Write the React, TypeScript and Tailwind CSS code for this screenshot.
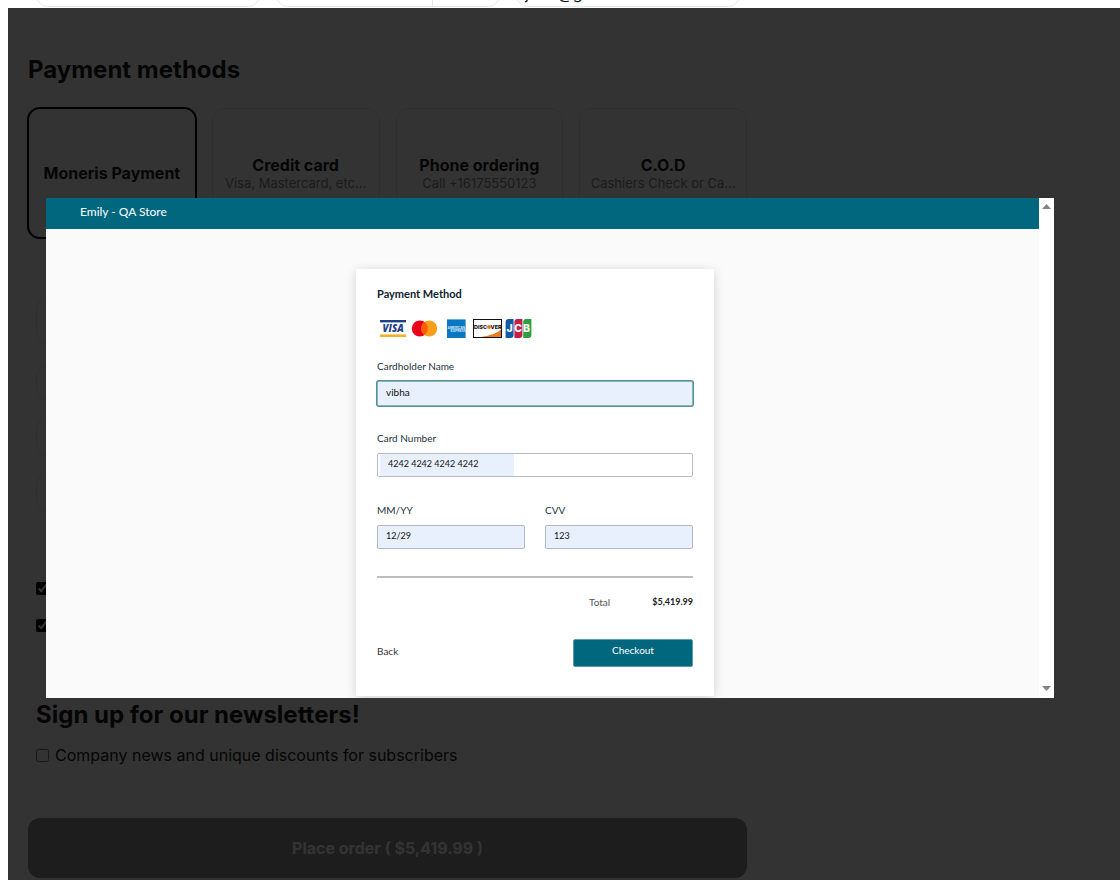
import React from "react";

const methods = [
  { id: "moneris", title: "Moneris Payment", note: "" },
  { id: "credit", title: "Credit card", note: "Visa, Mastercard, etc..." },
  { id: "phone", title: "Phone ordering", note: "Call +16175550123" },
  { id: "cod", title: "C.O.D", note: "Cashiers Check or Ca..." },
];

function ContactStrip() {
  return (
    <div className="flex h-2 items-end gap-4 overflow-hidden bg-white pb-px pl-9">
      <input
        aria-label="Full name"
        className="h-12 w-56 shrink-0 rounded-xl border border-gray-200 px-2"
      />
      <div className="flex h-12 w-56 shrink-0 rounded-xl border border-gray-200">
        <input aria-label="Phone" className="min-w-0 flex-1 px-2" />
        <input
          aria-label="Extension"
          className="w-[67px] border-l border-gray-200 px-2"
        />
      </div>
      <input
        aria-label="Email"
        type="email"
        defaultValue="john@gmail.com"
        className="h-12 w-56 shrink-0 rounded-xl border border-gray-200 px-2 pt-5 text-base text-gray-900"
      />
    </div>
  );
}

function MethodCard({
  title,
  note,
  selected,
}: {
  title: string;
  note: string;
  selected: boolean;
}) {
  return (
    <button
      type="button"
      aria-pressed={selected}
      className={
        selected
          ? "flex h-[130px] min-w-0 flex-col items-center justify-center rounded-xl px-2 outline-2 -outline-offset-1 outline-black"
          : "flex h-[130px] min-w-0 flex-col items-center justify-center rounded-xl border border-gray-200 px-2"
      }
    >
      <span className="text-base leading-5 font-bold whitespace-nowrap">
        {title}
      </span>
      {note && (
        <span className="text-center text-[13px] leading-4 whitespace-nowrap text-[#858585]">
          {note}
        </span>
      )}
    </button>
  );
}

function OrderPage() {
  return (
    <div className="max-w-[739px] pt-[46px] pl-5 text-[#1a1a1a]">
      <h2 className="text-2xl leading-8 font-bold">Payment methods</h2>
      <div className="mt-[22px] grid grid-cols-4 gap-4">
        {methods.map((m, i) => (
          <MethodCard
            key={m.id}
            title={m.title}
            note={m.note}
            selected={i === 0}
          />
        ))}
      </div>
      <div className="mt-[59px] flex flex-col px-2">
        <input
          aria-label="Coupon code"
          className="h-12 rounded-xl border border-gray-200 px-3"
        />
        <input
          aria-label="Purchase order"
          className="mt-5 h-9 rounded-xl border border-gray-200 px-3"
        />
        <input
          aria-label="Reference"
          className="mt-4 h-10 rounded-xl border border-gray-200 px-3"
        />
        <input
          aria-label="Comments"
          className="mt-4 h-10 rounded-xl border border-gray-200 px-3"
        />
        <div className="mt-[69px] flex flex-col gap-6">
          <input
            type="checkbox"
            aria-label="Same billing address"
            defaultChecked
            className="size-[13px] accent-black"
          />
          <input
            type="checkbox"
            aria-label="Accept terms"
            defaultChecked
            className="size-[13px] accent-black"
          />
        </div>
        <h2 className="mt-[67px] text-2xl leading-8 font-bold">
          Sign up for our newsletters!
        </h2>
        <label className="mt-3 flex items-center gap-1.5 text-base leading-6">
          <input type="checkbox" className="size-[13px]" />
          Company news and unique discounts for subscribers
        </label>
      </div>
      <button
        type="button"
        className="mt-[51px] h-[60px] w-full rounded-xl bg-[#919191] text-base font-bold text-white"
      >
        Place order ( $5,419.99 )
      </button>
    </div>
  );
}

function CardBrands() {
  return (
    <div className="mt-[17px] flex h-5">
      <svg width="32" height="20" viewBox="0 0 32 20" role="img" aria-label="Visa">
        <rect x="3" y="1" width="26" height="2.4" fill="#1f3f86" />
        <rect x="3" y="15.4" width="26" height="2.6" fill="#f6ae2d" />
        <text x="5.6" y="13" fontFamily="Open Sans, sans-serif" fontSize="9.6" fontWeight="800" fontStyle="italic" fill="#1f3f86">
          VISA
        </text>
      </svg>
      <svg width="32" height="20" viewBox="0 0 32 20" role="img" aria-label="Mastercard">
        <circle cx="10.8" cy="9.5" r="8" fill="#eb001b" />
        <circle cx="20.2" cy="9.5" r="8" fill="#f79e1b" />
        <path d="M15.5 3a8 8 0 0 1 0 13a8 8 0 0 1 0-13z" fill="#ff5f00" />
      </svg>
      <svg width="28" height="20" viewBox="0 0 28 20" role="img" aria-label="American Express">
        <rect x="6" y="0.4" width="18.6" height="18.6" fill="#0877c4" />
        <g fontFamily="Inter, sans-serif" fontWeight="700" fill="#d5ebf8">
          <text x="6.6" y="9.5" fontSize="3.2">AMERICAN</text>
          <text x="9.4" y="13.2" fontSize="3.4">EXPRESS</text>
        </g>
      </svg>
      <svg width="36" height="20" viewBox="0 0 36 20" role="img" aria-label="Discover">
        <rect x="4.5" y="0.5" width="28" height="18" fill="#fff" stroke="#111" />
        <path d="M12 18 Q26 16 32 10.5 V18 Z" fill="#e77b2c" />
        <g fontFamily="Inter, sans-serif" fontSize="5.4" fontWeight="800" fill="#111">
          <text x="5" y="10">DISC</text>
          <text x="21.6" y="10">VER</text>
        </g>
        <circle cx="20" cy="8.1" r="2" fill="#ee7623" />
      </svg>
      <svg width="28" height="20" viewBox="0 0 28 20" role="img" aria-label="JCB">
        <path d="M4 0H8.6V16a3 3 0 0 1-3 3H0.6V3a3 3 0 0 1 3-3z" fill="#0f5ba6" />
        <path d="M12.6 0H17.4V16a3 3 0 0 1-3 3H9.4V3a3 3 0 0 1 3-3z" fill="#c41e45" />
        <path d="M21.4 0H26.4V16a3 3 0 0 1-3 3H18.2V3a3 3 0 0 1 3-3z" fill="#2c9f42" />
        <g fontFamily="Inter, sans-serif" fontSize="10.5" fontWeight="800" fill="#fff">
          <text x="1.4" y="13.2">J</text>
          <text x="9.2" y="13.2">C</text>
          <text x="18" y="13.2">B</text>
        </g>
      </svg>
    </div>
  );
}

function Label({ htmlFor, children }: { htmlFor: string; children: React.ReactNode }) {
  return (
    <label htmlFor={htmlFor} className="text-[10px] leading-4 text-[#24323c]">
      {children}
    </label>
  );
}

function CardForm() {
  return (
    <form className="w-[358px] bg-white px-[21px] pt-[17px] pb-[29px] text-[10px] leading-4 shadow-[0_2px_10px_rgba(0,0,0,0.16)]">
      <h3 className="text-[11px] leading-4 font-bold text-[#0c2230]">Payment Method</h3>
      <CardBrands />
      <div className="mt-[19px] flex flex-col">
        <div className="flex flex-col gap-[7px]">
          <Label htmlFor="holder">Cardholder Name</Label>
          <input
            id="holder"
            defaultValue="vibha"
            className="h-[25px] rounded-xs border border-[#8fb3b8] bg-[#e8f0fe] px-2 pb-1 text-[#111] ring-1 ring-[#4f9290] outline-none"
          />
        </div>
        <div className="mt-6 flex flex-col gap-[7px]">
          <Label htmlFor="number">Card Number</Label>
          <div className="flex h-6 rounded-xs border border-[#b9bcc0] pl-0.5">
            <input
              id="number"
              defaultValue="4242 4242 4242 4242"
              className="w-[134px] bg-[#e8f0fe] px-2 pb-0.5 text-[9px] text-[#111] outline-none"
            />
          </div>
        </div>
        <div className="mt-[25px] grid grid-cols-2 gap-5">
          <div className="flex flex-col gap-[7px]">
            <Label htmlFor="expiry">MM/YY</Label>
            <input
              id="expiry"
              defaultValue="12/29"
              className="h-6 w-full rounded-xs border border-[#b3b9c6] bg-[#e8f0fe] px-2 pb-1 text-[9px] text-[#111] outline-none"
            />
          </div>
          <div className="flex flex-col gap-[7px]">
            <Label htmlFor="cvv">CVV</Label>
            <input
              id="cvv"
              defaultValue="123"
              className="h-6 w-full rounded-xs border border-[#b3b9c6] bg-[#e8f0fe] px-2 pb-1 text-[9px] text-[#111] outline-none"
            />
          </div>
        </div>
      </div>
      <div className="mt-[27px] border-t-2 border-[#bfbfbf]" />
      <div className="mt-4 flex justify-end gap-[42px]">
        <span className="text-[#555]">Total</span>
        <span className="text-[9px] font-bold text-[#222]">$5,419.99</span>
      </div>
      <div className="mt-[29px] flex items-center justify-between">
        <a href="#back" className="pb-1 text-[#333]">
          Back
        </a>
        <button
          type="button"
          className="h-7 w-[120px] rounded-xs border border-[#5b9dac] bg-[#00677f] pb-1.5 text-white"
        >
          Checkout
        </button>
      </div>
    </form>
  );
}

function PaymentDialog() {
  return (
    <div
      role="dialog"
      aria-label="Payment"
      className="flex h-[500px] w-full overflow-hidden bg-white font-[Lato,sans-serif]"
    >
      <div className="flex min-w-0 flex-1 flex-col bg-[#fafafa]">
        <header className="h-[31px] shrink-0 bg-[#00677f] pt-1 pl-[34px] text-xs leading-5 text-white">
          Emily - QA Store
        </header>
        <div className="flex justify-center pt-10 pr-[15px]">
          <CardForm />
        </div>
      </div>
      <div className="flex w-[15px] shrink-0 flex-col items-center justify-between pt-1.5 pb-[7px]">
        <svg width="9" height="5" viewBox="0 0 9 5" fill="#858585">
          <path d="M0 5L4.5 0L9 5z" />
        </svg>
        <svg width="9" height="5" viewBox="0 0 9 5" fill="#858585">
          <path d="M0 0L4.5 5L9 0z" />
        </svg>
      </div>
    </div>
  );
}

export default function App() {
  return (
    <div className="flex h-screen flex-col overflow-hidden bg-white font-[Inter,sans-serif]">
      <ContactStrip />
      <main className="relative ml-2 min-h-0 flex-1 overflow-hidden">
        <OrderPage />
        <div className="absolute inset-0 bg-black/80 pt-[190px] pr-[66px] pl-[38px]">
          <PaymentDialog />
        </div>
      </main>
    </div>
  );
}
